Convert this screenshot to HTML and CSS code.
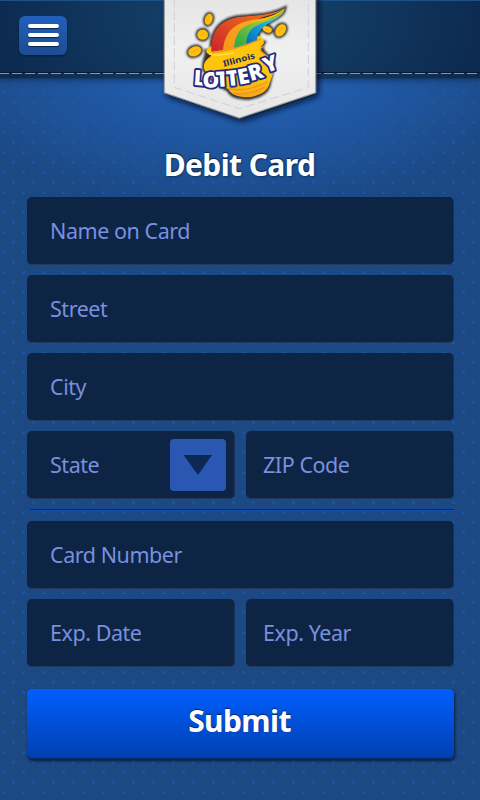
FILE: index.html
```html
<!DOCTYPE html>
<html lang="en">
<head>
<meta charset="utf-8">
<title>Debit Card</title>
<link rel="stylesheet" href="styles.css">
</head>
<body>
<header class="topbar">
  <button class="menu" aria-label="Menu"><span></span><span></span><span></span></button>
  <svg class="stitch" width="480" height="3"><path d="M-1 .5H480" stroke="#061526" stroke-opacity=".8"/><path d="M-1 1.5H480" stroke="#8298ad" stroke-dasharray="10 3"/></svg>
  <svg class="badge" width="170" height="135" viewBox="0 0 510 405">
    <defs>
      <linearGradient id="paper" x2="0" y2="1"><stop stop-color="#e3e3e4"/><stop offset=".5" stop-color="#f0f0f0"/><stop offset="1" stop-color="#e6e6e7"/></linearGradient>
      <linearGradient id="red" x1="1" x2="0" y2="1"><stop stop-color="#f47b20"/><stop offset=".6" stop-color="#df4a22"/><stop offset="1" stop-color="#c9252b"/></linearGradient>
      <linearGradient id="orange" x1="1" x2="0" y2="1"><stop stop-color="#ffd400"/><stop offset=".5" stop-color="#fba51a"/><stop offset="1" stop-color="#f7941d"/></linearGradient>
      <linearGradient id="green" x1="1" x2="0" y2="1"><stop stop-color="#eadb18"/><stop offset=".45" stop-color="#8cc63f"/><stop offset="1" stop-color="#21a84a"/></linearGradient>
      <linearGradient id="blue" x1="1" x2="0" y2="1"><stop stop-color="#a8d447"/><stop offset=".4" stop-color="#20b4e8"/><stop offset="1" stop-color="#0068b8"/></linearGradient>
      <linearGradient id="gold" x2="0" y2="1"><stop stop-color="#ffc80b"/><stop offset=".7" stop-color="#fcc30b"/><stop offset="1" stop-color="#f6a51c"/></linearGradient>
      <filter id="soft" x="-20%" y="-20%" width="140%" height="140%"><feGaussianBlur stdDeviation="3"/></filter>
      <filter id="drop" x="-10%" y="-10%" width="125%" height="125%"><feDropShadow dx="7" dy="9" stdDeviation="9" flood-color="#000f20" flood-opacity=".9"/></filter>
    </defs>
    <path d="M28-40H482V278L253 354L28 278Z" fill="url(#paper)" stroke="#999b9e" stroke-width="3" filter="url(#drop)"/>
    <path d="M58-6V262L253 326L460 262V-6" fill="none" stroke="#d0d1d3" stroke-width="3" stroke-dasharray="27 11"/>
    <g fill="#333" stroke="#333" stroke-width="11" filter="url(#soft)">
      <path d="M169 152C166 87 203 54 261 50C315 46 356 43 389 25C384 61 310 62 306 119L327 127C309 150 335 164 355 187C353 217 344 239 341 258Q333 282 299 290Q280 298 249 291Q228 287 220 270Q170 247 147 209C143 180 158 169 154 153Z"/>
      <ellipse cx="161" cy="58" rx="11" ry="17" transform="rotate(18 161 58)"/><ellipse cx="143" cy="104" rx="16" ry="15"/><ellipse cx="119" cy="154" rx="20" ry="14" transform="rotate(-22 119 154)"/><ellipse cx="377" cy="91" rx="14" ry="20" transform="rotate(35 377 91)"/><ellipse cx="337" cy="88" rx="14" ry="9" transform="rotate(20 337 88)"/>
    </g>
    <path d="M154 151Q162 138 176 137L314 108Q329 116 326 131Q307 146 329 161Q352 176 357 197C356 222 346 241 341 258Q332 280 300 288Q281 295 250 289Q230 285 220 268Q169 247 147 207C143 180 164 176 170 165Q151 162 154 151Z" fill="url(#gold)"/>
    <path d="M169 155C166 87 203 54 261 50C315 46 356 43 389 25C348 60 250 43 205 150Z" fill="url(#red)"/>
    <path d="M204 151C211 74 264 64 309 57Q360 51 389 25C359 73 257 59 239 143Z" fill="url(#orange)"/>
    <path d="M238 144C240 73 290 71 331 60Q371 51 389 25C368 68 290 68 276 135Z" fill="url(#green)"/>
    <path d="M274 136C274 81 307 76 340 62Q374 51 389 25C386 64 308 65 306 122Z" fill="url(#blue)"/>
    <path d="M173 158Q238 151 315 118M325 139Q305 151 331 164M223 266Q270 278 337 246M239 281Q280 288 328 262" fill="none" stroke="#ec9420" stroke-width="4" stroke-linecap="round"/>
    <path d="M163 163Q198 169 239 158" fill="none" stroke="#ffe247" stroke-width="4"/>
    <g fill="#fdc10d" stroke="#f5a81c" stroke-width="1">
      <ellipse cx="161" cy="58" rx="11" ry="17" transform="rotate(18 161 58)"/><ellipse cx="143" cy="104" rx="16" ry="15"/><ellipse cx="119" cy="154" rx="20" ry="14" transform="rotate(-22 119 154)"/><ellipse cx="377" cy="91" rx="14" ry="20" transform="rotate(35 377 91)"/><ellipse cx="337" cy="88" rx="14" ry="9" transform="rotate(20 337 88)"/>
      <path d="M156 66L163 50M135 109L149 98M109 158L129 148M371 98L381 84M331 85L343 91" stroke-width="3"/>
    </g>
    <text class="illinois" transform="translate(206 200) rotate(-15)" textLength="99" lengthAdjust="spacingAndGlyphs">Illinois</text>
    <text class="lottery" x="115 142 184 216 252 287 334" y="255 262 261 259 254 244 220" rotate="4 2 -3 -6 -11 -17 -20">LOTTERY</text>
  </svg>
</header>
<main class="content">
  <h1 class="title"><span>Debit Card</span></h1>
  <form class="form">
    <div class="field"><span>Name on Card</span></div>
    <div class="field"><span>Street</span></div>
    <div class="field"><span>City</span></div>
    <div class="row">
      <div class="field select"><span>State</span><i class="arrow"><svg width="30" height="20"><path d="M.5 0H29L15 20Z" fill="#0d2853"/></svg></i></div>
      <div class="field narrow"><span>ZIP Code</span></div>
    </div>
    <div class="divider"></div>
    <div class="field"><span>Card Number</span></div>
    <div class="row">
      <div class="field"><span>Exp. Date</span></div>
      <div class="field narrow"><span>Exp. Year</span></div>
    </div>
    <button class="submit" type="button"><span>Submit</span></button>
  </form>
</main>
</body>
</html>
```
FILE: styles.css
```css
* { box-sizing: border-box; }
body {
  margin: 0;
  width: 480px;
  height: 800px;
  overflow: hidden;
  font-family: "Noto Sans", "Open Sans", sans-serif;
  background-color: #1c4883;
  background-image:
    radial-gradient(circle at 3.5px 12.5px, rgba(22,91,181,.65) 1.3px, transparent 2px),
    radial-gradient(circle at 13.5px 2.5px, rgba(22,91,181,.65) 1.3px, transparent 2px),
    radial-gradient(ellipse 310px 155px at 240px 60px, #2667bc 0%, #2057a2 50%, rgba(28,72,131,0) 100%);
  background-size: 20px 20px, 20px 20px, 100% 100%;
}
.topbar {
  position: relative;
  height: 79px;
  padding: 15px 19px;
  background: radial-gradient(ellipse 240px 150px at 240px 10px, #16466f, #0d2b51);
  border-top: 1px solid #1c518a;
  border-bottom: 1px solid #163a6a;
  box-shadow: 0 2px 5px rgba(10,35,80,.5);
}
.menu {
  display: flex;
  flex-direction: column;
  align-items: center;
  gap: 5px;
  width: 48px;
  height: 39px;
  margin: 0;
  padding: 8px 0 0;
  border: 0;
  border-radius: 6px;
  background: linear-gradient(#225fbd, #1c4d91);
  box-shadow: 0 1px 2px #071b36;
}
.menu span {
  width: 31px;
  height: 4px;
  border-radius: 2px;
  background: #fff;
  box-shadow: 0 1px 1px #0c2446;
}
.stitch { position: absolute; left: 0; top: 71px; }
.badge { position: absolute; left: 155px; top: -1px; }
.illinois { font: bold 25px "Noto Sans", sans-serif; fill: #1d2b5c; }
.lottery {
  font: 900 64px "Noto Sans", sans-serif;
  fill: #fff;
  stroke: #202a80;
  stroke-width: 11px;
  stroke-linejoin: round;
  paint-order: stroke;
}
.content { padding: 65px 26px 0 27px; }
.title {
  height: 53px;
  margin: 0 2px 0 0;
  font-size: 30px;
  line-height: 41px;
  text-align: center;
  color: #fff;
  letter-spacing: -.6px;
  text-shadow: 0 -1px 1px #0a2145, 1px 1px 2px #123465;
}
.form { display: flex; flex-direction: column; gap: 10px; }
.row { display: grid; grid-template-columns: 208px 208px; gap: 11px; }
.field {
  display: flex;
  align-items: center;
  height: 68px;
  padding: 1px 8px 0 23px;
  border-radius: 5px;
  background: #0e2445;
  border-bottom: 1px solid #24395b;
  border-right: 1px solid #1b3255;
  color: #7890df;
  font-size: 21.5px;
  line-height: 28px;
  letter-spacing: -.45px;
}
.narrow { padding-left: 17px; }
.select { justify-content: space-between; }
.arrow {
  display: flex;
  align-items: center;
  justify-content: center;
  width: 56px;
  height: 52px;
  border-radius: 4px;
  background: #2a57b1;
}
.divider {
  height: 2px;
  margin-left: 3px;
  border-top: 1px solid #0c2b58;
  background: #1150b2;
}
.submit {
  height: 70px;
  margin: 12px 0 0;
  padding: 0 2px 6px 0;
  border: 0;
  border-bottom: 1px solid #04296d;
  border-radius: 5px;
  background: linear-gradient(#005eff, #0040b0);
  box-shadow: 1px 2px 3px #0a1e3b;
  font: bold 30px "Noto Sans", sans-serif;
  letter-spacing: -.6px;
  color: #fff;
  text-shadow: 0 -1px 1px #06265e;
}
```
